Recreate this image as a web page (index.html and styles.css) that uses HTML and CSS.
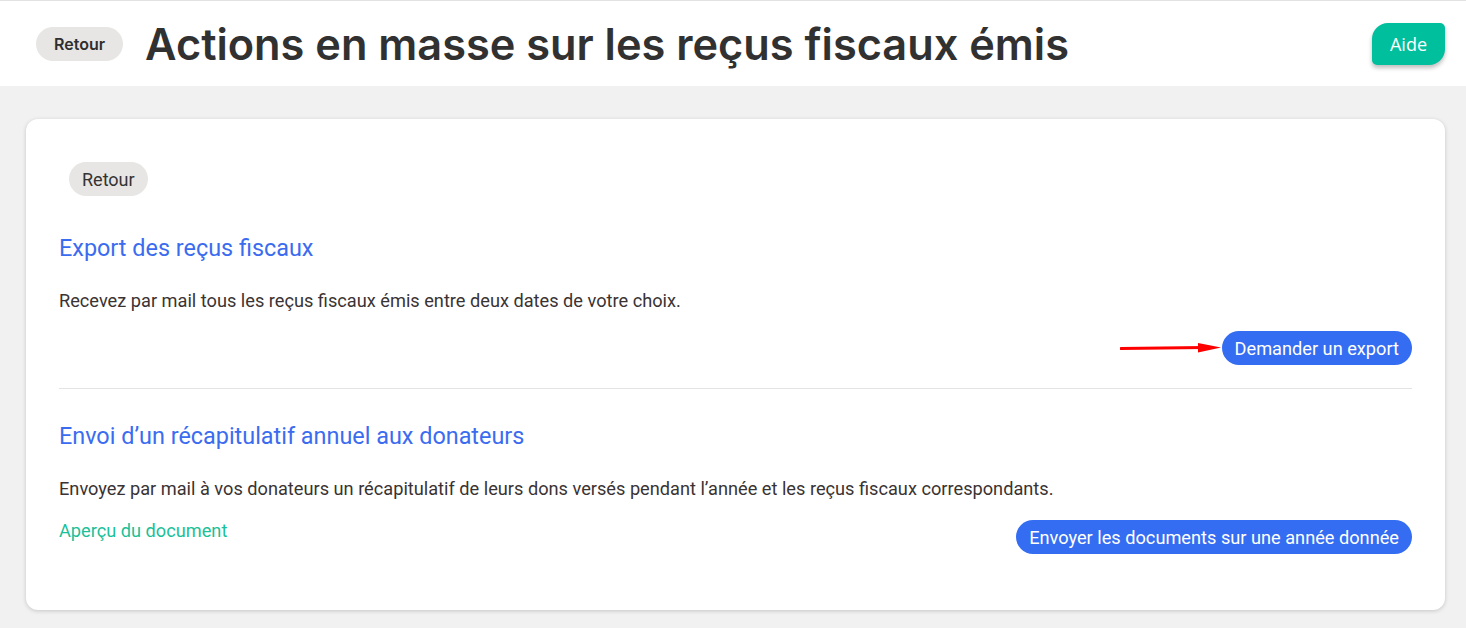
FILE: index.html
```html
<!DOCTYPE html>
<html lang="fr">
<head>
  <meta charset="UTF-8">
  <meta name="viewport" content="width=device-width, initial-scale=1.0">
  <link rel="stylesheet" href="styles.css">
  <title>Actions en masse sur les reçus fiscaux émis</title>
</head>
<body>
  <header class="top-bar">
    <button class="back-pill">Retour</button>
    <h1>Actions en masse sur les reçus fiscaux émis</h1>
    <button class="help-button">Aide</button>
  </header>

  <main class="page">
    <div class="card">
      <button class="back-button">Retour</button>

      <section class="block">
        <h2>Export des reçus fiscaux</h2>
        <p>Recevez par mail tous les reçus fiscaux émis entre deux dates de votre choix.</p>
        <div class="actions actions-end">
          <svg class="arrow" width="102" height="12" viewBox="0 0 102 12">
            <path d="M1 6.5 L84 5.5" stroke="#ff0000" stroke-width="3" stroke-linecap="round" fill="none"/>
            <path d="M78 1 L101 5.5 L78 10.5 Z" fill="#ff0000"/>
          </svg>
          <button class="blue-button">Demander un export</button>
        </div>
      </section>

      <hr class="divider">

      <section class="block">
        <h2>Envoi d’un récapitulatif annuel aux donateurs</h2>
        <p>Envoyez par mail à vos donateurs un récapitulatif de leurs dons versés pendant l’année et les reçus fiscaux correspondants.</p>
        <div class="actions">
          <a class="preview-link" href="#">Aperçu du document</a>
          <button class="blue-button">Envoyer les documents sur une année donnée</button>
        </div>
      </section>
    </div>
  </main>
</body>
</html>
```

FILE: styles.css
```css
body {
  margin: 0;
  font-family: Roboto, "Liberation Sans", Arial, sans-serif;
  background-color: #f1f1f1;
  color: #3a3333;
}

button {
  font-family: inherit;
  border: none;
  cursor: pointer;
}

.top-bar {
  display: flex;
  align-items: center;
  height: 85px;
  padding: 0 21px 0 36px;
  background-color: #fff;
  border-top: 1px solid #e2e2e2;
}

.back-pill {
  height: 34px;
  padding: 0 18px;
  border-radius: 17px;
  background-color: #e8e6e4;
  color: #2f2f2f;
  font-family: Inter, "Noto Sans", sans-serif;
  font-size: 16px;
  font-weight: 600;
}

.top-bar h1 {
  margin: 0 0 0 22px;
  font-family: Inter, "Noto Sans", sans-serif;
  font-size: 43.3px;
  font-weight: 600;
  color: #313131;
}

.help-button {
  margin-left: auto;
  width: 73px;
  height: 42px;
  background-color: #00bf9d;
  color: #fff;
  font-family: "Open Sans", sans-serif;
  font-size: 18px;
  border-radius: 16px 5px 16px 5px;
  box-shadow: 0 3px 4px rgba(0, 0, 0, 0.25);
}

.page {
  padding: 33px 21px 19px 26px;
}

.card {
  background-color: #fff;
  border-radius: 12px;
  box-shadow: 0 1px 4px rgba(0, 0, 0, 0.18);
  padding: 43px 33px 56px 33px;
}

.back-button {
  display: block;
  margin-left: 10px;
  height: 34px;
  padding: 0 13px;
  border-radius: 17px;
  background-color: #e8e6e4;
  color: #333;
  font-size: 18px;
}

.block h2 {
  margin: 38px 0 0 0;
  font-size: 23.4px;
  font-weight: 400;
  line-height: 28px;
  color: #3b6cf0;
}

.block p {
  margin: 27px 0 0 0;
  font-size: 18.2px;
  line-height: 24px;
}

.actions {
  display: flex;
  justify-content: space-between;
  align-items: flex-start;
  margin-top: 18px;
}

.actions-end {
  justify-content: flex-end;
  align-items: center;
}

.arrow {
  display: block;
}

.blue-button {
  height: 34px;
  padding: 0 13px;
  border-radius: 17px;
  background-color: #346df1;
  color: #fff;
  font-size: 18.2px;
}

.preview-link {
  color: #1bbf98;
  text-decoration: none;
  font-size: 18.2px;
  line-height: 24px;
}

.actions .preview-link + .blue-button {
  margin-top: 1px;
}

.divider {
  margin: 23px 0 0 0;
  border: none;
  border-top: 1px solid #e3e3e3;
}

.divider + .block h2 {
  margin-top: 33px;
}
```
